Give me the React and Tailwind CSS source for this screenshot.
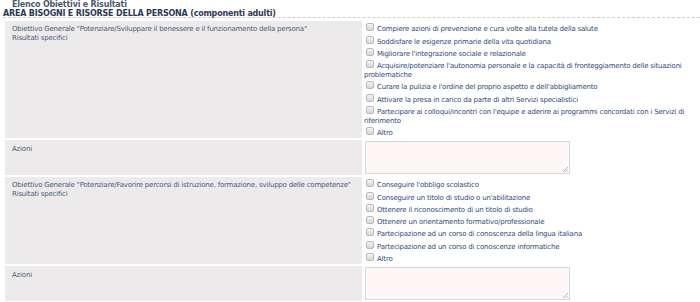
const FONT = "font-['DejaVu_Sans',sans-serif]";

const area1 = [
  "Compiere azioni di prevenzione e cura volte alla tutela della salute",
  "Soddisfare le esigenze primarie della vita quotidiana",
  "Migliorare l'integrazione sociale e relazionale",
  "Acquisire/potenziare l'autonomia personale e la capacità di fronteggiamento delle situazioni problematiche",
  "Curare la pulizia e l'ordine del proprio aspetto e dell'abbigliamento",
  "Attivare la presa in carico da parte di altri Servizi specialistici",
  "Partecipare ai colloqui/incontri con l'equipe e aderire ai programmi concordati con i Servizi di riferimento",
  "Altro",
];

const area2 = [
  "Conseguire l'obbligo scolastico",
  "Conseguire un titolo di studio o un'abilitazione",
  "Ottenere il riconoscimento di un titolo di studio",
  "Ottenere un orientamento formativo/professionale",
  "Partecipazione ad un corso di conoscenza della lingua italiana",
  "Partecipazione ad un corso di conoscenze informatiche",
  "Altro",
];

function Check({ label }) {
  return (
    <div className="pt-[3.25px] leading-[9px] text-[#2f4c7c] pr-[6px]">
      <span className="inline-block w-[8px] h-[8px] mt-[-2px] ml-[2px] mr-[3px] align-top rounded-[2px] border border-[#b9b9b9] bg-gradient-to-b from-[#f4f4f4] to-[#d6d6d6]" />
      {label}
    </div>
  );
}

function Obiettivo({ title, items }) {
  return (
    <>
      <div className="flex gap-[2px]">
        <div className="w-[357px] shrink-0 bg-[#eceaea] px-[7px] pt-[3.5px] leading-[9px] text-[#4a5c7a]">
          <div>{title}</div>
          <div>Risultati specifici</div>
        </div>
        <div className="flex-1 pt-[1px]">
          {items.map((it) => (
            <Check key={it} label={it} />
          ))}
        </div>
      </div>
      <div className="flex gap-[2px]">
        <div className="w-[357px] shrink-0 bg-[#eceaea] px-[7px] pt-[5px] leading-[9px] text-[#4a5c7a]">
          Azioni
        </div>
        <div className="flex-1 py-[1px] pl-[1px]">
          <div className="relative w-[205px] h-[33px] border border-[#d9d6d6] bg-[#fdf7f7]">
            <svg className="absolute right-[1px] bottom-[1px]" width="5" height="5" viewBox="0 0 5 5">
              <path d="M0 5L5 0M2.5 5L5 2.5" stroke="#999" strokeWidth="0.7" />
            </svg>
          </div>
        </div>
      </div>
    </>
  );
}

export default function App() {
  return (
    <div className={`${FONT} w-[700px] h-[302px] bg-white overflow-hidden text-[7px] tracking-[-0.2px]`}>
      <div className="pl-[12px] leading-[9px] font-bold text-[8px] text-[#4b5a70]">
        Elenco Obiettivi e Risultati
      </div>
      <div className="ml-[3px] pt-[1px] leading-[7px] font-bold text-[8px] text-[#2c3a55] border-b border-dashed border-[#cfcfcf]">
        AREA BISOGNI E RISORSE DELLA PERSONA (componenti adulti)
      </div>
      <div className="ml-[5px] mt-[3px] flex flex-col gap-[2px]">
        <Obiettivo
          title={'Obiettivo Generale "Potenziare/Sviluppare il benessere e il funzionamento della persona"'}
          items={area1}
        />
        <Obiettivo
          title={'Obiettivo Generale "Potenziare/Favorire percorsi di istruzione, formazione, sviluppo delle competenze"'}
          items={area2}
        />
      </div>
    </div>
  );
}
